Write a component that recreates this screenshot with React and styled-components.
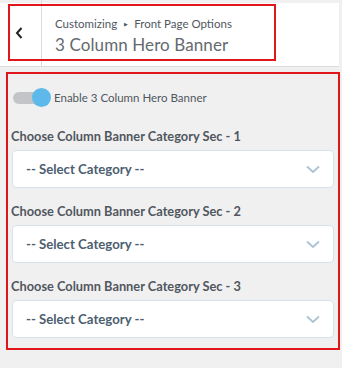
import React from 'react';
import styled, { createGlobalStyle } from 'styled-components';

const GlobalStyle = createGlobalStyle`
  html, body {
    margin: 0;
    padding: 0;
    background: #f0f0f1;
    font-family: Lato, "Open Sans", sans-serif;
  }
`;

const Page = styled.div`
  width: 342px;
  height: 368px;
  padding-top: 3px;
  box-sizing: border-box;
  overflow: hidden;
`;

const Header = styled.div`
  position: relative;
  display: flex;
  height: 63px;
  background: #fff;
  border-bottom: 1px solid #dcdcde;
  margin-right: 3px;
`;

const BackButton = styled.div`
  width: 42px;
  flex: none;
  display: flex;
  align-items: center;
  justify-content: center;
  border-right: 1px solid #dcdcde;
  margin-top: -3px;
  padding-right: 3px;
  box-sizing: border-box;
`;

const Titles = styled.div`
  display: flex;
  flex-direction: column;
  padding: 13px 0 0 13px;
`;

const Crumb = styled.div`
  font-size: 11.5px;
  color: #50575e;
  line-height: 16px;
  display: flex;
  align-items: center;
`;

const Arrow = styled.span`
  font-size: 5px;
  margin: 0 6px 0 7px;
`;

const Title = styled.div`
  font-size: 17px;
  color: #646970;
  line-height: 22px;
  margin-top: 2px;
  letter-spacing: 0.1px;
`;

const Mark = styled.div`
  position: absolute;
  left: 8px;
  top: 1px;
  width: 268px;
  height: 57px;
  border: 2px solid #e0161b;
  box-sizing: border-box;
  pointer-events: none;
`;

const Panel = styled.section`
  margin: 5px 2px 0 6px;
  border: 2px solid #e0161b;
  padding: 14px 4px 0 4px;
  height: 278px;
  box-sizing: border-box;
`;

const ToggleRow = styled.div`
  display: flex;
  align-items: center;
  gap: 5px;
  font-size: 11.5px;
  color: #50575e;
  margin-left: 1px;
  margin-bottom: 20px;
  height: 19px;
`;

const Track = styled.div`
  position: relative;
  width: 36px;
  height: 12px;
  border-radius: 6px;
  background: #c3c4c7;
`;

const Knob = styled.div`
  position: absolute;
  right: -2px;
  top: -4px;
  width: 19px;
  height: 19px;
  border-radius: 50%;
  background: #5cb9ea;
`;

const Field = styled.div`
  margin-bottom: 14px;
`;

const Label = styled.div`
  font-size: 12.8px;
  font-weight: 700;
  color: #50575e;
  line-height: 18px;
  margin: 0 0 5px -1px;
`;

const Select = styled.div`
  height: 38px;
  box-sizing: border-box;
  background: #fff;
  border: 1px solid #d5e2ec;
  border-radius: 4px;
  display: flex;
  align-items: center;
  justify-content: space-between;
  padding: 0 13px 0 13px;
  font-size: 13.2px;
  font-weight: 700;
  color: #4c5e70;
`;

const Chevron = () => (
  <svg width="14" height="9" viewBox="0 0 14 9">
    <path d="M1 1.5 L7 7 L13 1.5" fill="none" stroke="#a9c3d6" strokeWidth="1.8" />
  </svg>
);

const BackIcon = () => (
  <svg width="8" height="12" viewBox="0 0 8 12">
    <path d="M6.5 1 L2 6 L6.5 11" fill="none" stroke="#1d2327" strokeWidth="2" />
  </svg>
);

const sections = [1, 2, 3];

const App = () => (
  <Page>
    <GlobalStyle />
    <Header>
      <BackButton>
        <BackIcon />
      </BackButton>
      <Titles>
        <Crumb>
          Customizing<Arrow>▶</Arrow>Front Page Options
        </Crumb>
        <Title>3 Column Hero Banner</Title>
      </Titles>
      <Mark />
    </Header>
    <Panel>
      <ToggleRow>
        <Track>
          <Knob />
        </Track>
        Enable 3 Column Hero Banner
      </ToggleRow>
      {sections.map((n) => (
        <Field key={n}>
          <Label>Choose Column Banner Category Sec - {n}</Label>
          <Select>
            -- Select Category --
            <Chevron />
          </Select>
        </Field>
      ))}
    </Panel>
  </Page>
);

export default App;
